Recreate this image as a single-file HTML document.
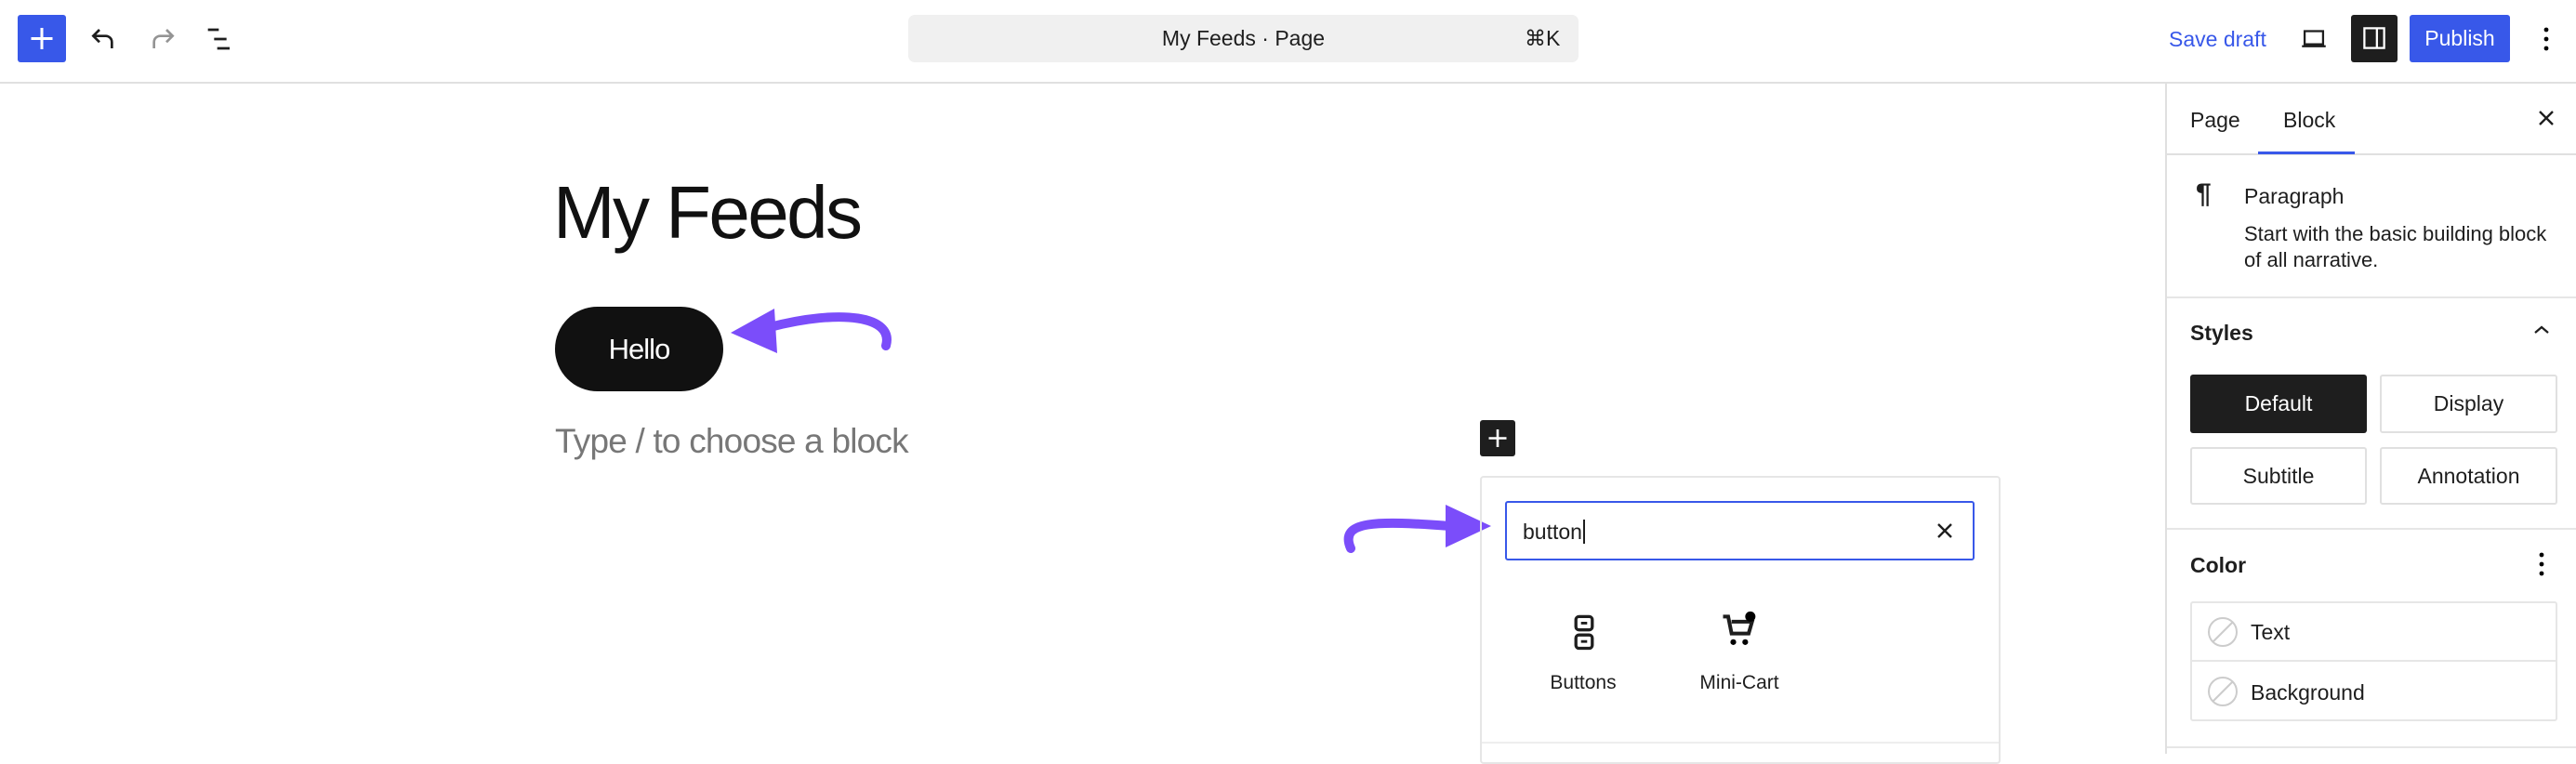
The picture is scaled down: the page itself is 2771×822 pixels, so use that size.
<!DOCTYPE html>
<html><head><meta charset="utf-8"><style>
*{box-sizing:border-box;margin:0;padding:0}
body{width:2771px;height:811px;overflow:hidden;background:#fff;font-family:"Liberation Sans",sans-serif;color:#1e1e1e;position:relative}
.a{position:absolute}
.t{font-size:23px;white-space:nowrap}
</style></head><body>
<!-- header -->
<div class="a" style="left:0;top:0;width:2771px;height:90px;border-bottom:2px solid #e0e0e0"></div>
<div class="a" style="left:19px;top:16px;width:52px;height:51px;background:#3858e9;border-radius:3px"></div>
<svg class="a" style="left:19px;top:16px" width="52" height="51"><path d="M26 14v23M14.5 25.5h23" stroke="#fff" stroke-width="3"/></svg>
<svg class="a" style="left:92px;top:22px" width="40" height="40" viewBox="0 0 24 24"><path d="M9 6L5 10l4 4M5 10h8a4 4 0 014 4v4" fill="none" stroke="#1e1e1e" stroke-width="1.6"/></svg>
<svg class="a" style="left:154px;top:22px" width="40" height="40" viewBox="0 0 24 24"><path d="M15 6l4 4-4 4M19 10h-8a4 4 0 00-4 4v4" fill="none" stroke="#949494" stroke-width="1.6"/></svg>
<svg class="a" style="left:217px;top:22px" width="40" height="40" viewBox="0 0 24 24"><path d="M4 6h7M8 12h8M10 18h8" stroke="#1e1e1e" stroke-width="1.6"/></svg>
<div class="a" style="left:977px;top:16px;width:721px;height:51px;background:#f0f0f0;border-radius:7px"></div>
<div class="a t" style="left:977px;width:721px;top:28px;text-align:center">My Feeds · Page</div>
<div class="a t" style="left:1640px;top:28px">⌘K</div>
<div class="a t" style="left:2333px;top:29px;color:#3858e9">Save draft</div>
<svg class="a" style="left:2470px;top:25px" width="38" height="34" viewBox="0 0 24 24"><path d="M5 6h14v10H5zM3 17.5h18" fill="none" stroke="#1e1e1e" stroke-width="1.6"/></svg>
<div class="a" style="left:2529px;top:16px;width:50px;height:51px;background:#1e1e1e;border-radius:3px"></div>
<svg class="a" style="left:2537px;top:24px" width="34" height="34" viewBox="0 0 24 24"><path d="M4.5 4.5h15v15h-15zM14 4.5v15" fill="none" stroke="#fff" stroke-width="1.6"/></svg>
<div class="a" style="left:2592px;top:16px;width:108px;height:51px;background:#3858e9;border-radius:3px;color:#fff;font-size:23px;line-height:51px;text-align:center">Publish</div>
<svg class="a" style="left:2727px;top:25px" width="24" height="34"><circle cx="12" cy="7" r="2.4"/><circle cx="12" cy="17" r="2.4"/><circle cx="12" cy="27" r="2.4"/></svg>
<!-- canvas -->
<div class="a" style="left:595px;top:183px;font-size:80px;letter-spacing:-2.6px;color:#111">My Feeds</div>
<div class="a" style="left:597px;top:330px;width:181px;height:91px;background:#111;border-radius:46px;color:#fff;font-size:31px;line-height:91px;text-align:center;letter-spacing:-1px">Hello</div>
<div class="a" style="left:597px;top:454px;font-size:37px;color:#777;letter-spacing:-0.8px">Type / to choose a block</div>
<svg class="a" style="left:0;top:0" width="2771" height="811">
<path d="M953 372 C962 340 905 332 828 352" fill="none" stroke="#7b4dfa" stroke-width="10" stroke-linecap="round"/>
<path d="M786 358 L833 332 L836 380Z" fill="#7b4dfa"/>
<path d="M1453 590 C1440 560 1480 560 1560 566" fill="none" stroke="#7b4dfa" stroke-width="10" stroke-linecap="round"/>
<path d="M1604 566 L1555 543 L1555 589Z" fill="#7b4dfa"/>
</svg>
<div class="a" style="left:1592px;top:452px;width:38px;height:39px;background:#1e1e1e;border-radius:3px"></div>
<svg class="a" style="left:1592px;top:452px" width="38" height="39"><path d="M19 10v19M9.5 19.5h19" stroke="#fff" stroke-width="2.6"/></svg>
<div class="a" style="left:1592px;top:512px;width:560px;height:310px;border:2px solid #e6e6e6;border-radius:4px"></div>
<div class="a" style="left:1594px;top:798px;width:556px;height:2px;background:#eee"></div>
<div class="a" style="left:1619px;top:539px;width:505px;height:64px;border:2.5px solid #3858e9;border-radius:3px"></div>
<div class="a t" style="left:1638px;top:559px">button<span style="border-left:2px solid #1e1e1e;margin-left:1px"></span></div>
<svg class="a" style="left:2080px;top:559px" width="24" height="24"><path d="M5 5l14 14M19 5L5 19" stroke="#1e1e1e" stroke-width="2.4"/></svg>
<svg class="a" style="left:1685px;top:659px" width="38" height="44" viewBox="0 0 16 20"><rect x="4" y="2" width="8" height="6.5" rx="1.5" fill="none" stroke="#1e1e1e" stroke-width="1.5"/><rect x="4" y="11" width="8" height="6.5" rx="1.5" fill="none" stroke="#1e1e1e" stroke-width="1.5"/><path d="M6.5 5.2h3M6.5 14.2h3" stroke="#1e1e1e" stroke-width="1.3"/></svg>
<div class="a t" style="left:1653px;width:100px;top:723px;text-align:center;font-size:21px">Buttons</div>
<svg class="a" style="left:1848px;top:656px" width="44" height="44" viewBox="0 0 24 24"><path d="M3 4h3l2 10h10l2-7H8" fill="none" stroke="#1e1e1e" stroke-width="2.2"/><circle cx="9" cy="19" r="1.7"/><circle cx="16" cy="19" r="1.7"/><circle cx="19" cy="4" r="3"/></svg>
<div class="a t" style="left:1811px;width:120px;top:723px;text-align:center;font-size:21px">Mini-Cart</div>
<!-- sidebar -->
<div class="a" style="left:2329px;top:90px;width:2px;height:721px;background:#e0e0e0"></div>
<div class="a" style="left:2331px;top:165px;width:440px;height:2px;background:#e0e0e0"></div>
<div class="a t" style="left:2356px;top:116px">Page</div>
<div class="a t" style="left:2456px;top:116px">Block</div>
<div class="a" style="left:2429px;top:163px;width:104px;height:3px;background:#3858e9"></div>
<svg class="a" style="left:2727px;top:115px" width="24" height="24"><path d="M5 5l14 14M19 5L5 19" stroke="#1e1e1e" stroke-width="2.4"/></svg>
<div class="a" style="left:2362px;top:192px;font-size:30px;font-weight:bold">¶</div>
<div class="a t" style="left:2414px;top:198px;font-weight:500">Paragraph</div>
<div class="a t" style="left:2414px;top:238px;line-height:28px;font-size:22px">Start with the basic building block<br>of all narrative.</div>
<div class="a" style="left:2331px;top:319px;width:440px;height:2px;background:#e6e6e6"></div>
<div class="a t" style="left:2356px;top:345px;font-weight:bold">Styles</div>
<svg class="a" style="left:2722px;top:343px" width="24" height="24"><path d="M5 15l7-6 7 6" fill="none" stroke="#1e1e1e" stroke-width="2.2"/></svg>
<div class="a" style="left:2356px;top:403px;width:190px;height:63px;background:#1e1e1e;border-radius:3px;color:#fff;font-size:23px;line-height:63px;text-align:center">Default</div>
<div class="a" style="left:2560px;top:403px;width:191px;height:63px;border:2px solid #e0e0e0;border-radius:3px;font-size:23px;line-height:59px;text-align:center">Display</div>
<div class="a" style="left:2356px;top:481px;width:190px;height:62px;border:2px solid #e0e0e0;border-radius:3px;font-size:23px;line-height:58px;text-align:center">Subtitle</div>
<div class="a" style="left:2560px;top:481px;width:191px;height:62px;border:2px solid #e0e0e0;border-radius:3px;font-size:23px;line-height:58px;text-align:center">Annotation</div>
<div class="a" style="left:2331px;top:568px;width:440px;height:2px;background:#e6e6e6"></div>
<div class="a t" style="left:2356px;top:595px;font-weight:bold">Color</div>
<svg class="a" style="left:2722px;top:590px" width="24" height="34"><circle cx="12" cy="7" r="2.4"/><circle cx="12" cy="17" r="2.4"/><circle cx="12" cy="27" r="2.4"/></svg>
<div class="a" style="left:2356px;top:647px;width:395px;height:129px;border:2px solid #e6e6e6;border-radius:3px"></div>
<div class="a" style="left:2358px;top:710px;width:391px;height:2px;background:#e6e6e6"></div>
<svg class="a" style="left:2374px;top:663px" width="34" height="34"><circle cx="17" cy="17" r="15" fill="none" stroke="#ccc" stroke-width="2"/><path d="M6 28L28 6" stroke="#ccc" stroke-width="2"/></svg>
<svg class="a" style="left:2374px;top:727px" width="34" height="34"><circle cx="17" cy="17" r="15" fill="none" stroke="#ccc" stroke-width="2"/><path d="M6 28L28 6" stroke="#ccc" stroke-width="2"/></svg>
<div class="a t" style="left:2421px;top:667px">Text</div>
<div class="a t" style="left:2421px;top:732px">Background</div>
<div class="a" style="left:2331px;top:803px;width:440px;height:2px;background:#e6e6e6"></div>
</body></html>
